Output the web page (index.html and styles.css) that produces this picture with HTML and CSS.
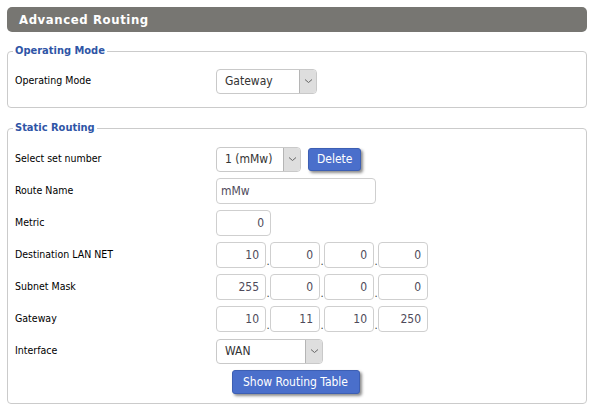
FILE: index.html
```html
<!DOCTYPE html>
<html>
<head>
<meta charset="utf-8">
<link rel="stylesheet" href="styles.css">
</head>
<body>
<div class="page">
  <div class="titlebar">Advanced Routing</div>

  <fieldset class="group group-mode">
    <legend>Operating Mode</legend>
    <div class="row">
      <div class="label">Operating Mode</div>
      <div class="select w100">
        <span class="sel-text">Gateway</span>
        <span class="sel-arrow"><svg width="9" height="6" viewBox="0 0 9 6"><path d="M1 1.5 L4.5 4.5 L8 1.5" fill="none" stroke="#666" stroke-width="1"/></svg></span>
      </div>
    </div>
  </fieldset>

  <fieldset class="group group-static">
    <legend>Static Routing</legend>
    <div class="row">
      <div class="label">Select set number</div>
      <div class="select w84">
        <span class="sel-text">1 (mMw)</span>
        <span class="sel-arrow"><svg width="9" height="6" viewBox="0 0 9 6"><path d="M1 1.5 L4.5 4.5 L8 1.5" fill="none" stroke="#666" stroke-width="1"/></svg></span>
      </div>
      <button class="btn btn-delete">Delete</button>
    </div>
    <div class="row">
      <div class="label">Route Name</div>
      <div class="input w159 left">mMw</div>
    </div>
    <div class="row">
      <div class="label">Metric</div>
      <div class="input w54">0</div>
    </div>
    <div class="row">
      <div class="label">Destination LAN NET</div>
      <div class="ip">
        <div class="input oct">10</div><span class="dot">.</span>
        <div class="input oct">0</div><span class="dot">.</span>
        <div class="input oct">0</div><span class="dot">.</span>
        <div class="input oct">0</div>
      </div>
    </div>
    <div class="row">
      <div class="label">Subnet Mask</div>
      <div class="ip">
        <div class="input oct">255</div><span class="dot">.</span>
        <div class="input oct">0</div><span class="dot">.</span>
        <div class="input oct">0</div><span class="dot">.</span>
        <div class="input oct">0</div>
      </div>
    </div>
    <div class="row">
      <div class="label">Gateway</div>
      <div class="ip">
        <div class="input oct">10</div><span class="dot">.</span>
        <div class="input oct">11</div><span class="dot">.</span>
        <div class="input oct">10</div><span class="dot">.</span>
        <div class="input oct">250</div>
      </div>
    </div>
    <div class="row">
      <div class="label">Interface</div>
      <div class="select w107">
        <span class="sel-text">WAN</span>
        <span class="sel-arrow"><svg width="9" height="6" viewBox="0 0 9 6"><path d="M1 1.5 L4.5 4.5 L8 1.5" fill="none" stroke="#666" stroke-width="1"/></svg></span>
      </div>
    </div>
    <div class="btn-row">
      <button class="btn btn-show">Show Routing Table</button>
    </div>
  </fieldset>
</div>
</body>
</html>
```

FILE: styles.css
```css
html, body {
  margin: 0;
  padding: 0;
  background: #fff;
}
body {
  font-family: "DejaVu Sans Condensed", "DejaVu Sans", sans-serif;
  font-size: 11px;
  color: #000;
}
.page {
  padding: 7px 7px 0 7px;
}
.titlebar {
  height: 25px;
  line-height: 25px;
  background: #777672;
  border-radius: 5px;
  color: #fff;
  font-weight: bold;
  font-size: 13px;
  letter-spacing: 0.6px;
  padding-left: 12px;
}
.group {
  margin: 0;
  border: 1px solid #cbcbcb;
  border-radius: 4px;
  padding: 0 7px;
}
.group legend {
  color: #2f55a6;
  font-weight: bold;
  font-size: 11px;
  line-height: 14px;
  padding: 0 2px;
  margin-left: -2px;
}
.group-mode {
  margin-top: 12px;
  padding-top: 7px;
  padding-bottom: 10px;
}
.group-static {
  margin-top: 13px;
  padding-top: 8px;
  padding-bottom: 9px;
}
.row {
  display: flex;
  align-items: center;
  height: 32px;
}
.label {
  width: 201px;
  flex: none;
  margin-top: -2px;
  font-size: 10.5px;
}
.select {
  display: flex;
  height: 25px;
  box-sizing: border-box;
  border: 1px solid #c9c9c9;
  border-radius: 4px;
  background: #fff;
  overflow: hidden;
  color: #333;
  font-size: 12px;
}
.sel-text {
  flex: 1;
  padding-left: 8px;
  line-height: 23px;
}
.sel-arrow {
  width: 16px;
  border-left: 1px solid #b5b5b5;
  background: #dedede;
  display: flex;
  align-items: center;
  justify-content: center;
}
.w100 { width: 101px; }
.w84 { width: 85px; }
.w107 { width: 107px; }
.input {
  height: 26px;
  box-sizing: border-box;
  border: 1px solid #cfcfcf;
  border-radius: 4px;
  background: #fff;
  color: #4e4a5a;
  font-size: 12px;
  line-height: 24px;
  text-align: right;
  padding: 0 6px;
}
.input.left {
  text-align: left;
  padding-left: 4px;
}
.w159 { width: 160px; }
.w54 { width: 55px; }
.ip {
  display: flex;
  align-items: flex-end;
}
.oct {
  width: 50px;
}
.dot {
  width: 4px;
  text-align: center;
  font-size: 11px;
  line-height: 12px;
  color: #333;
}
.btn {
  font-family: "DejaVu Sans Condensed", "DejaVu Sans", sans-serif;
  font-size: 12px;
  color: #fff;
  background: #4a6fcb;
  border: 1px solid #3d5fb3;
  border-radius: 3px;
  box-shadow: 2px 2px 3px rgba(0, 0, 0, 0.45);
  height: 23px;
  padding: 0 8px;
  cursor: pointer;
}
.btn-delete {
  margin-left: 7px;
  width: 53px;
}
.btn-row {
  text-align: center;
  padding-top: 3px;
}
.btn-show {
  height: 24px;
  width: 128px;
  margin-left: -3px;
}
```
